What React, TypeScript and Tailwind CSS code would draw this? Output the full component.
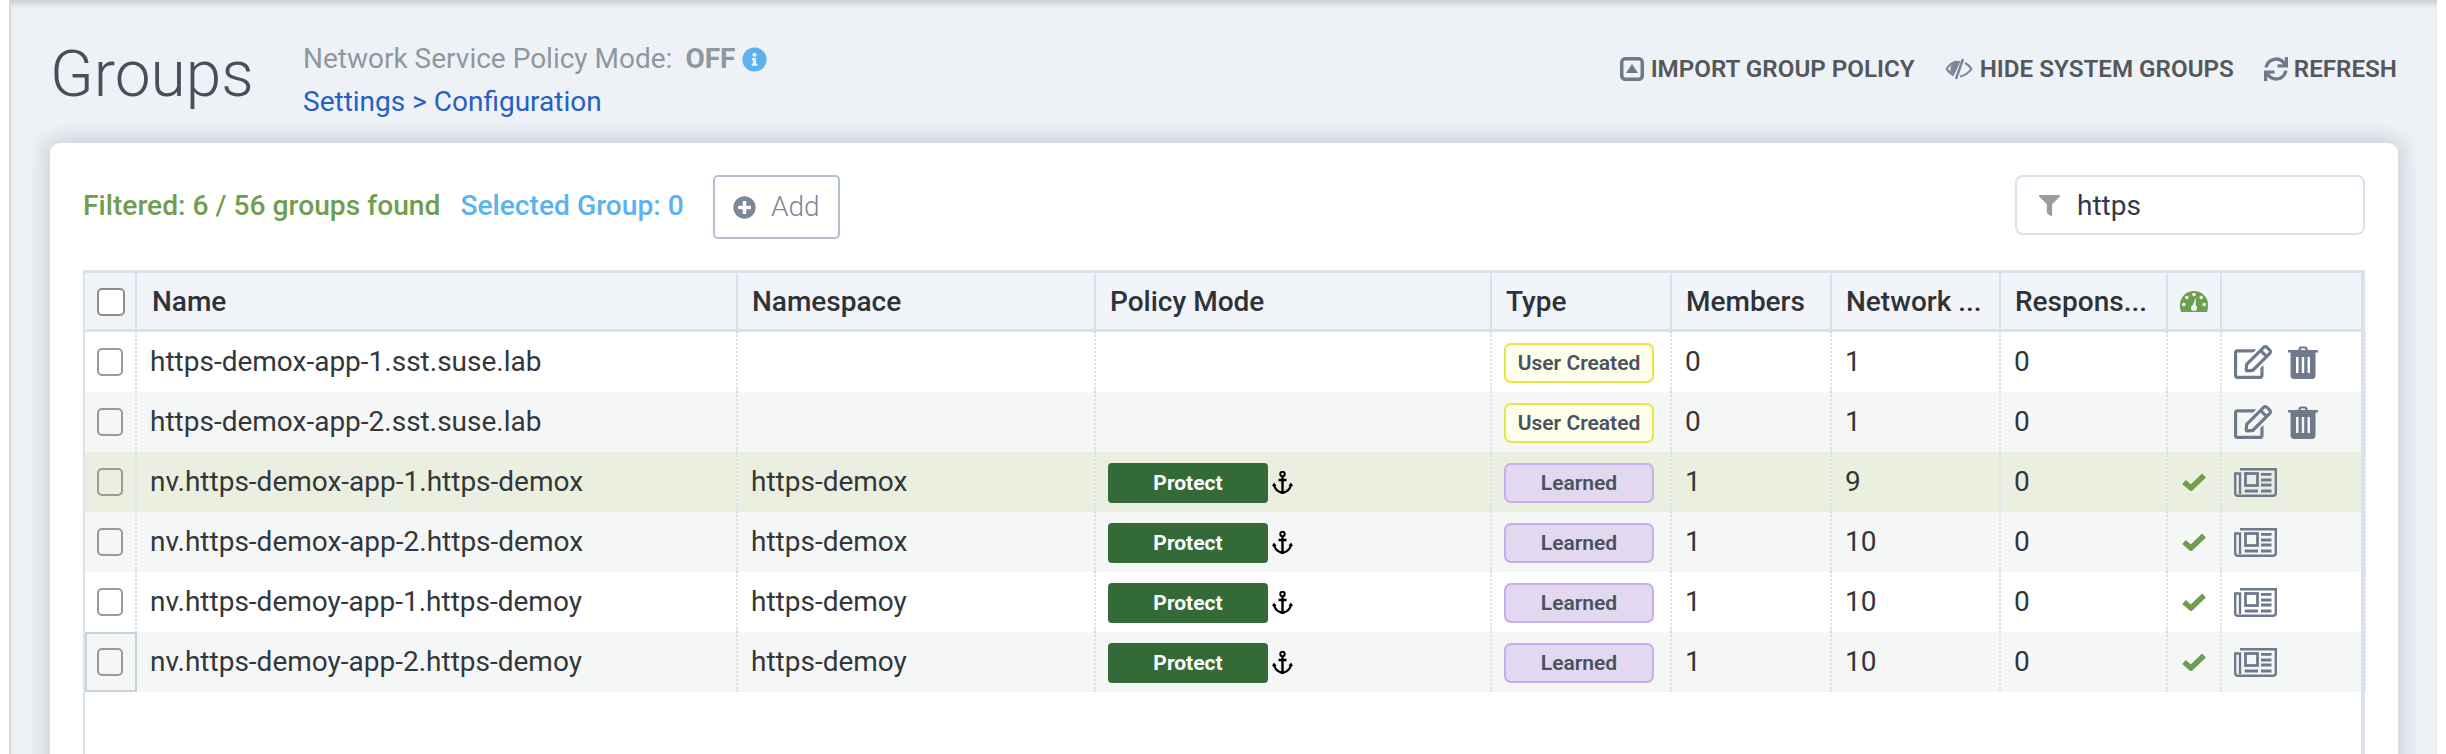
import React from "react";
import { FaFilter, FaInfoCircle, FaPlusCircle, FaRegEdit, FaSync } from "react-icons/fa";

const Trash = ({ className = "" }: { className?: string }) => (
  <svg viewBox="0 0 30 33" className={className} fill="currentColor">
    <path fillRule="evenodd" d="M10 4 L11 1.5 Q11.5 0.5 13 0.5 H17 Q18.5 0.5 19 1.5 L20 4 H29 Q30 4 30 5 V6.5 H27.5 V29 Q27.5 33 24 33 H6 Q2.5 33 2.5 29 V6.5 H0 V5 Q0 4 1 4 Z M12.5 4 H17.5 L16.8 2.5 H13.2 Z M8 11 V27 H10.5 V11 Z M13.8 11 V27 H16.2 V11 Z M19.5 11 V27 H22 V11 Z" />
  </svg>
);

const Eye = ({ className = "" }: { className?: string }) => (
  <svg viewBox="0 0 28 22" className={className} fill="none" stroke="currentColor" strokeWidth="2">
    <path d="M1.5 11 Q6 4 12 3.5 M20 5 Q24 7 26.5 11 Q22 17 15 18.5" />
    <path d="M1.5 11 Q4 15 8 17 L14 4 Q9 4 7 8 Q5.5 12 8 17 Z" fill="currentColor" />
    <path d="M18 1 L11 21" strokeWidth="2.5" />
  </svg>
);

const Paper = ({ className = "" }: { className?: string }) => (
  <svg viewBox="0 0 43 29" className={className} fill="none" stroke="currentColor" strokeWidth="2.4">
    <path d="M6 1.2 H41.8 V25 Q41.8 27.8 39 27.8 H4 Q1.2 27.8 1.2 25 V5.5 H6 V26" />
    <rect x="11.5" y="5.5" width="12" height="12" strokeWidth="2.8" />
    <path d="M27 6.3 H37.5 M27 12 H37.5 M27 17 H37.5 M10.7 23 H24 M27 23 H37.5" strokeWidth="2.8" />
  </svg>
);

const ImportIcon = ({ className = "" }: { className?: string }) => (
  <svg viewBox="0 0 24 24" className={className} fill="none" stroke="currentColor">
    <rect x="1.75" y="1.75" width="20.5" height="20.5" rx="3.5" strokeWidth="3.5" />
    <path d="M12 7 L18 16 H6 Z" fill="currentColor" stroke="none" />
  </svg>
);

const Gauge = ({ className = "" }: { className?: string }) => (
  <svg viewBox="0 0 28 22" className={className}>
    <path d="M1 22 Q0 19 0 15 A14 14 0 0 1 28 15 Q28 19 27 22 Z" fill="currentColor" />
    <g fill="#f1f4f8">
      <circle cx="14" cy="4.5" r="1.8" />
      <circle cx="6.8" cy="7.5" r="1.8" />
      <circle cx="21.2" cy="7.5" r="1.8" />
      <circle cx="3.8" cy="14.5" r="1.8" />
      <circle cx="24.2" cy="14.5" r="1.8" />
      <circle cx="14" cy="18" r="3" />
      <path d="M15.8 7 L15.6 16 H12.6 Z" />
    </g>
  </svg>
);

const Anchor = ({ className = "" }: { className?: string }) => (
  <svg viewBox="0 0 21 23" className={className} fill="none" stroke="currentColor" strokeWidth="2.4">
    <circle cx="10.5" cy="3" r="2.2" strokeWidth="2" />
    <path d="M10.5 5.5 V22 M6.5 9 H14.5" />
    <path d="M2 13 Q2.5 20 10.5 22 Q18.5 20 19 13" />
    <path d="M0 15 L2 11.5 L4.5 15 Z M16.5 15 L19 11.5 L21 15 Z" fill="currentColor" stroke="none" />
  </svg>
);

const Tick = ({ className = "" }: { className?: string }) => (
  <svg viewBox="0 0 24 18" className={className} fill="none" stroke="currentColor" strokeWidth="5.5">
    <path d="M2 9 L9 15 L22 2.5" />
  </svg>
);

const Check = ({ on }: { on: boolean }) => (
  <input type="checkbox" readOnly className={`appearance-none block w-[28px] h-[28px] rounded-[5px] border-2 border-[#9a9a9a] ${on ? "bg-transparent" : "bg-white"}`} />
);

const rows = [
  { name: "https-demox-app-1.sst.suse.lab", ns: "", type: "User Created", m: "0", n: "1", bg: "bg-white" },
  { name: "https-demox-app-2.sst.suse.lab", ns: "", type: "User Created", m: "0", n: "1", bg: "bg-[#f5f7f7]" },
  { name: "nv.https-demox-app-1.https-demox", ns: "https-demox", type: "Learned", m: "1", n: "9", bg: "bg-[#ebefe0]" },
  { name: "nv.https-demox-app-2.https-demox", ns: "https-demox", type: "Learned", m: "1", n: "10", bg: "bg-[#f5f7f7]" },
  { name: "nv.https-demoy-app-1.https-demoy", ns: "https-demoy", type: "Learned", m: "1", n: "10", bg: "bg-white" },
  { name: "nv.https-demoy-app-2.https-demoy", ns: "https-demoy", type: "Learned", m: "1", n: "10", bg: "bg-[#f5f7f7]" },
];

const cols = "grid grid-cols-[52px_601px_358px_396px_180px_160px_169px_167px_54px_144px]";
const th = "flex items-center h-full pt-[2px] px-[14px] border-r-2 border-[#d9e2ec] text-[28px] font-medium text-[#2f3237] whitespace-nowrap overflow-hidden";
const td = "flex items-center h-full px-[13px] border-r-2 border-dotted border-[#d9e2ec] text-[28px] text-[#33363a] whitespace-nowrap";

export default function App() {
  return (
    <div className="w-[2446px] h-[754px] overflow-hidden bg-white font-['Roboto',sans-serif]">
      <div className="h-[754px] ml-[9px] mr-[9px] bg-[#eef2f6] border-l-2 border-[#d5d8dc] shadow-[inset_0_8px_8px_-6px_#b8bcc2] px-[39px] pt-0">
        <header className="flex h-[143px] items-start">
          <h1 className="mt-[37px] w-[253px] text-[64px] leading-[76px] font-light text-[#474f5a]">Groups</h1>
          <div className="mt-[42px]">
            <p className="flex items-center text-[28px] leading-[34px] text-[#8f989e]">
              <span>Network Service Policy Mode:</span>
              <span className="ml-[13px] font-bold">OFF</span>
              <FaInfoCircle className="ml-[7px] text-[25px] text-[#5cb2f0]" />
            </p>
            <p className="mt-[9px] text-[28px] leading-[34px] text-[#2660c4]">Settings &gt; Configuration</p>
          </div>
          <nav className="ml-auto mt-[51px] flex items-center gap-[30px] text-[24.2px] font-semibold text-[#54575c] whitespace-nowrap mr-[1px]">
            <span className="flex items-center gap-[7px]"><ImportIcon className="w-[24px] h-[24px] text-[#6e7a8c]" />IMPORT GROUP POLICY</span>
            <span className="flex items-center gap-[7px]"><Eye className="w-[28px] h-[22px] text-[#7a8798]" />HIDE SYSTEM GROUPS</span>
            <span className="flex items-center gap-[6px]"><FaSync className="text-[24px] text-[#6e7a8c]" />REFRESH</span>
          </nav>
        </header>
        <main className="h-[640px] bg-white rounded-t-[10px] shadow-[0_-6px_18px_#d5dbe3,8px_0_18px_#d5dbe3,-8px_0_18px_#d5dbe3] pl-[33px] pr-[33px]">
          <div className="h-[127px] flex items-start">
            <div className="mt-[47px] flex text-[28.2px] leading-[32px] font-medium whitespace-nowrap">
              <span className="text-[#709e50]">Filtered: 6 / 56 groups found</span>
              <span className="ml-[20px] text-[#5cb2f0]">Selected Group: 0</span>
            </div>
            <button className="ml-[29px] mt-[32px] w-[127px] h-[64px] flex items-center justify-center gap-[15px] rounded-[5px] border-2 border-[#b2c0cf] text-[28px] font-light text-[#7b8698]">
              <FaPlusCircle className="text-[23px]" />Add
            </button>
            <div className="ml-auto mt-[32px] w-[350px] h-[60px] flex items-center pl-[22px] rounded-[8px] border-2 border-[#d9e2ec] text-[28px] text-[#33384a]">
              <FaFilter className="text-[21px] text-[#999da1] mr-[17px]" /><span className="pt-[2px]">https</span>
            </div>
          </div>
          <div className="h-[513px] border-l-2 border-r-4 border-[#d9e2ec]">
            <div className={`${cols} h-[62px] bg-[#f1f4f8] border-y-[3px] border-[#d9e2ec]`}>
              <div className={`${th} !px-[12px]`}><span className="block w-[28px] h-[28px] rounded-[5px] border-2 border-[#8d8d8d] bg-white shrink-0" /></div>
              <div className={`${th} !pl-[15px]`}>Name</div>
              <div className={th}>Namespace</div>
              <div className={th}>Policy Mode</div>
              <div className={th}>Type</div>
              <div className={th}>Members</div>
              <div className={th}>Network ...</div>
              <div className={th}>Respons...</div>
              <div className={`${th} !px-0 !pt-0 justify-center`}><Gauge className="w-[28px] h-[22px] text-[#709e50] shrink-0" /></div>
              <div className="h-full" />
            </div>
            {rows.map((r, i) => (
              <div key={r.name} className={`${cols} h-[60px] ${r.bg}`}>
                <div className={`${td} !px-[12px] ${i === 5 ? "border-2 !border-solid !border-[#c5d3de] !pl-[10px]" : ""}`}><Check on={r.bg !== "bg-white"} /></div>
                <div className={td}>{r.name}</div>
                <div className={td}>{r.ns}</div>
                <div className={`${td} !px-[12px]`}>
                  {r.ns && (
                    <>
                      <span className="w-[160px] h-[40px] mt-[1px] pt-[2px] rounded-[4px] bg-[#346a38] text-white text-[21px] font-bold flex items-center justify-center">Protect</span>
                      <Anchor className="ml-[4px] w-[21px] h-[23px] text-black" />
                    </>
                  )}
                </div>
                <div className={`${td} !px-[12px]`}>
                  <span className={`w-[150px] h-[40px] mt-[1px] pt-[2px] rounded-[7px] border-2 text-[21px] font-semibold text-[#4a5260] flex items-center justify-center ${r.type === "Learned" ? "bg-[#e2d8ef] border-[#c8ade8]" : "bg-[#fdfeec] border-[#e8e448]"}`}>{r.type}</span>
                </div>
                <div className={td}>{r.m}</div>
                <div className={td}>{r.n}</div>
                <div className={td}>0</div>
                <div className={`${td} !px-0 justify-center`}>{r.ns && <Tick className="w-[24px] h-[18px] text-[#709e50]" />}</div>
                <div className={`${td} !px-[12px]`}>
                  {r.ns ? (
                    <Paper className="w-[43px] h-[29px] text-[#6e7a8c]" />
                  ) : (
                    <span className="flex items-center gap-[16px] text-[#6e7a8c]">
                      <FaRegEdit className="text-[38px]" />
                      <Trash className="w-[30px] h-[33px]" />
                    </span>
                  )}
                </div>
              </div>
            ))}
          </div>
        </main>
      </div>
    </div>
  );
}
